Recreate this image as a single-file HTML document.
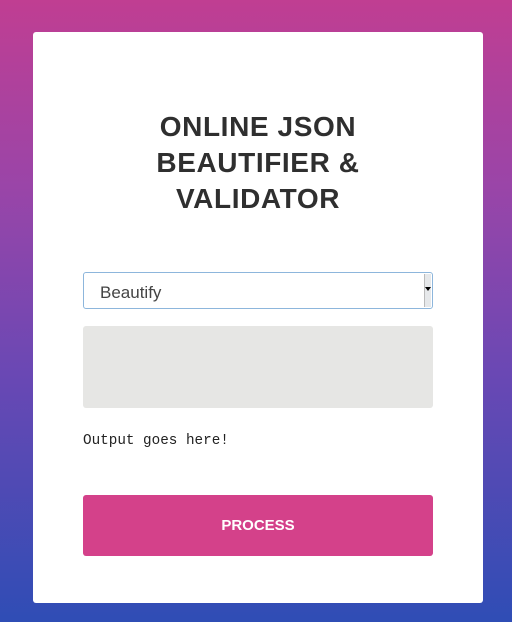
<!DOCTYPE html>
<html><head><style>
html,body{margin:0;padding:0;width:512px;height:622px;overflow:hidden}
body{background:linear-gradient(180deg,#c03e92 0%,#9a45a8 30%,#6a48b4 60%,#2f4db5 100%);font-family:"Liberation Sans",sans-serif;position:relative}
.card{position:absolute;left:33px;top:32px;width:450px;height:571px;background:#fff;border-radius:3px}
h1{position:absolute;left:0;width:450px;top:77px;margin:0;text-align:center;font-size:28px;line-height:36px;font-weight:900;color:#2f2f2f;letter-spacing:0.6px}
.sel{position:absolute;left:50px;top:240px;width:350px;height:37px;border:1px solid #8db6dc;border-radius:3px;box-sizing:border-box;font-size:17px;color:#444;padding:10px 0 0 16px}
.arr{position:absolute;right:1px;top:1px;width:6px;height:33px;background:#e6e8ea;border-left:1px solid #bbb}
.arr:after{content:"";position:absolute;left:0px;top:13px;border-left:3px solid transparent;border-right:3px solid transparent;border-top:4px solid #000}
.ta{position:absolute;left:50px;top:294px;width:350px;height:82px;background:#e6e6e4;border-radius:3px}
.out{position:absolute;left:50px;top:401px;font-family:"Liberation Mono",monospace;font-size:14.3px;color:#222}
.btn{position:absolute;left:50px;top:463px;width:350px;height:61px;background:#d4418a;border-radius:3px;color:#fff;font-weight:bold;font-size:15px;text-align:center;line-height:61px}
</style></head><body>
<div class="card">
<h1>ONLINE JSON<br>BEAUTIFIER &amp;<br>VALIDATOR</h1>
<div class="sel">Beautify<div class="arr"></div></div>
<div class="ta"></div>
<div class="out">Output goes here!</div>
<div class="btn">PROCESS</div>
</div>
</body></html>
